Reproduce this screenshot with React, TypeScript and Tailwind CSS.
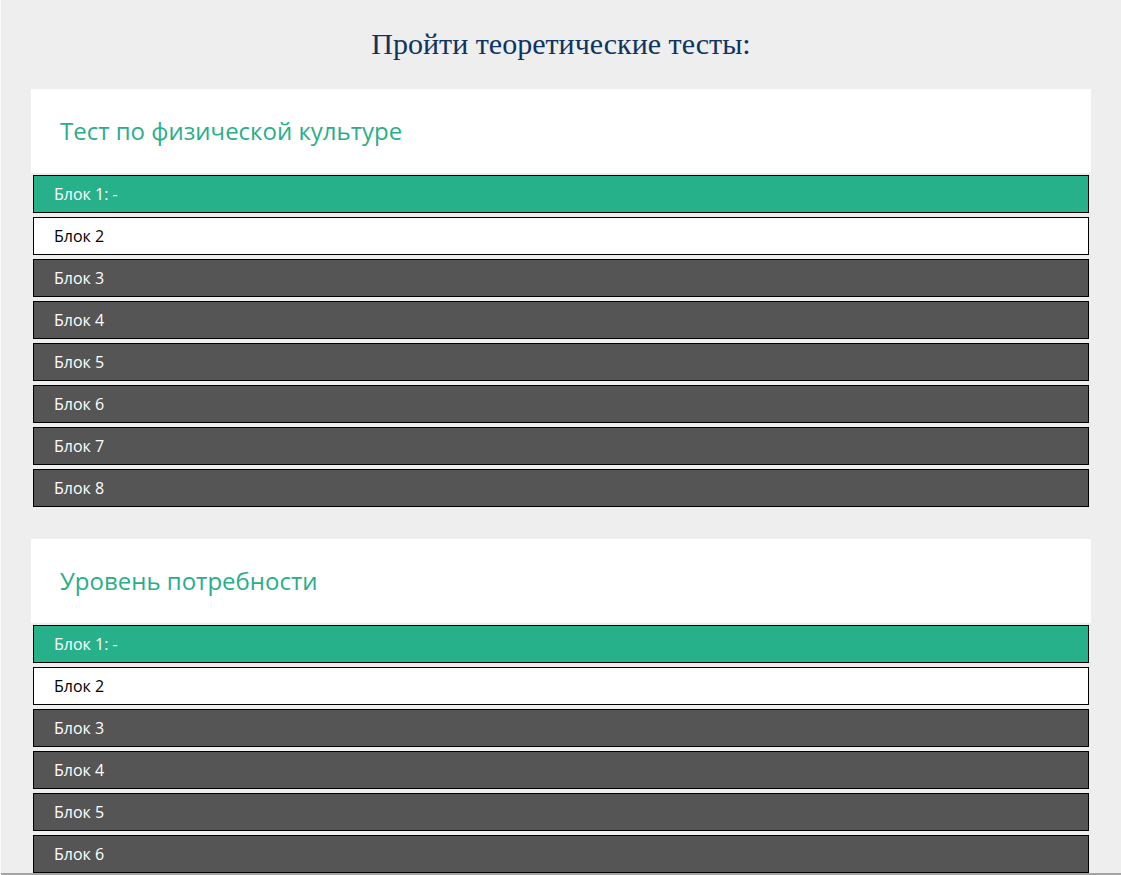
const tests = [
  { title: 'Тест по физической культуре', blocks: 8 },
  { title: 'Уровень потребности', blocks: 8 },
]

function blockLabel(index: number) {
  return index === 0 ? 'Блок 1: -' : `Блок ${index + 1}`
}

function blockClass(index: number) {
  if (index === 0) return 'bg-[#26b18b] text-white'
  if (index === 1) return 'bg-white text-black'
  return 'bg-[#555555] text-white'
}

function TestCard({ title, blocks }: { title: string; blocks: number }) {
  return (
    <section>
      <div className="bg-white pl-[29px] pt-[26px] pb-[26px]">
        <h3 className="text-[24px] leading-[32px] text-[#2aae8a]">{title}</h3>
      </div>
      <div className="mx-[2px] mt-[2px] flex flex-col gap-1">
        {Array.from({ length: blocks }, (_, index) => (
          <div key={index} className={`border border-black py-[6px] pl-5 text-[16px] leading-6 ${blockClass(index)}`}>
            {blockLabel(index)}
          </div>
        ))}
      </div>
    </section>
  )
}

export default function App() {
  return (
    <div className="relative h-[875px] overflow-hidden border-l border-[#fafafa] bg-[#eeeeee]" style={{ fontFamily: '"Open Sans", "Noto Sans", sans-serif' }}>
      <h2 className="pt-[29px] text-center text-[30px] leading-[30px] text-[#0e3462]" style={{ fontFamily: '"Liberation Serif", "Times New Roman", serif' }}>
        Пройти теоретические тесты:
      </h2>
      <div className="ml-[30px] mr-[30px] mt-[30px] flex flex-col gap-8">
        {tests.map((test) => (
          <TestCard key={test.title} title={test.title} blocks={test.blocks} />
        ))}
      </div>
      <div className="absolute bottom-0 left-0 right-0 h-[2px] bg-[#a3a3a3]" />
    </div>
  )
}
